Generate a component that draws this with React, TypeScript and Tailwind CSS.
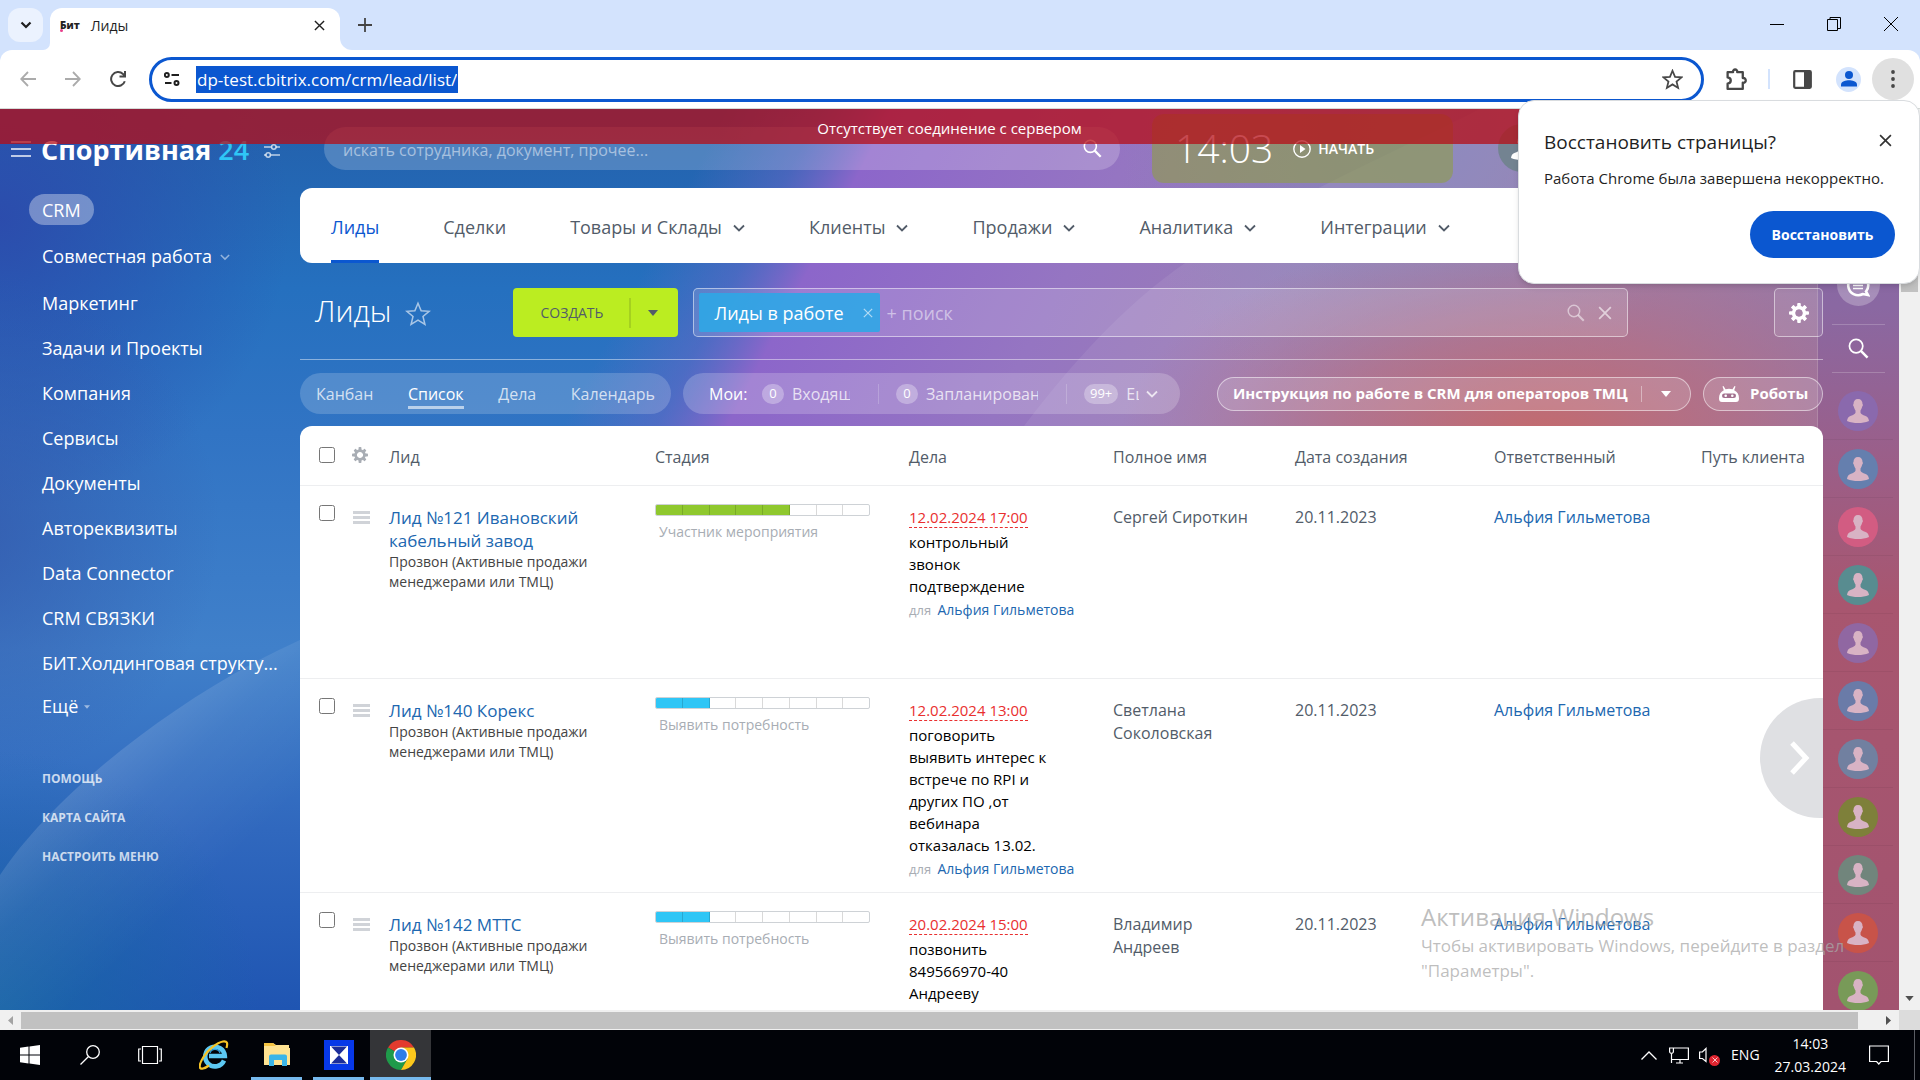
import React from 'react';

type IconProps = { className?: string };

/* ---------- icons ---------- */
const Chevron = ({ className = '' }: IconProps) => (
  <svg viewBox="0 0 12 12" className={className} fill="none" stroke="currentColor" strokeWidth="1.8">
    <path d="M1 3.5l5 5 5-5" />
  </svg>
);
const Caret = ({ className = '' }: IconProps) => (
  <svg viewBox="0 0 10 6" className={className} fill="currentColor">
    <path d="M0 0h10L5 6z" />
  </svg>
);
const Cross = ({ className = '' }: IconProps) => (
  <svg viewBox="0 0 12 12" className={className} fill="none" stroke="currentColor" strokeWidth="1.5">
    <path d="M1 1l10 10M11 1L1 11" />
  </svg>
);
const Magnifier = ({ className = '' }: IconProps) => (
  <svg viewBox="0 0 22 22" className={className} fill="none" stroke="currentColor">
    <circle cx="8.5" cy="8.5" r="7" strokeWidth="1.8" />
    <path d="M13.5 13.5l7 7" strokeWidth="2.6" />
  </svg>
);
const Star = ({ className = '', width = 1.5 }: IconProps & { width?: number }) => (
  <svg viewBox="0 0 24 24" className={className} fill="none" stroke="currentColor" strokeWidth={width}>
    <path d="M12 2l2.9 7 7.4.5-5.7 4.8 1.8 7.3L12 17.6l-6.4 4 1.8-7.3L1.7 9.500l7.400-.5z" />
  </svg>
);
const Gear = ({ className = '' }: IconProps) => (
  <svg viewBox="0 0 20 20" className={className} fill="currentColor">
    {[0, 45, 90, 135].map((a) => (
      <rect key={a} x="8.200" y="0" width="3.600" height="20" rx="1" transform={`rotate(${a} 10 10)`} mask="url(#gearHole)" />
    ))}
    <path fillRule="evenodd" d="M10 2.800a7.200 7.200 0 1 0 0 14.400 7.200 7.200 0 0 0 0-14.400zm0 3.400a3.800 3.800 0 1 1 0 7.600 3.800 3.800 0 0 1 0-7.600z" />
  </svg>
);
const GearDefs = () => (
  <svg className="absolute h-0 w-0">
    <mask id="gearHole" maskUnits="userSpaceOnUse" x="0" y="0" width="20" height="20">
      <rect width="20" height="20" fill="#fff" />
      <circle cx="10" cy="10" r="4" fill="#000" />
    </mask>
  </svg>
);
const Person = ({ className = '' }: IconProps) => (
  <svg viewBox="0 0 22 24" className={className} fill="currentColor">
    <path d="M11 0c3 0 4.500 2 4.500 5 .6.4.5 2-.3 2.600-.4 2-1 3-1.700 3.800v2.400c.6 1.600 2.500 2.200 4.500 3 2.400 1 3.600 2.200 4 5.200C18.500 23.500 15 24 11 24S3.500 23.500 0 22c.4-3 1.600-4.200 4-5.200 2-.8 3.900-1.400 4.500-3v-2.400C7.800 10.600 7.200 9.600 6.800 7.600 6 7 5.900 5.400 6.500 5c0-3 1.500-5 4.500-5z" />
  </svg>
);

/* ---------- browser chrome ---------- */
function TabStrip() {
  return (
    <div className="flex h-[50px] items-start bg-[#d3e3fd] pt-2">
      <button aria-label="Поиск вкладок" className="ml-2 flex h-[34px] w-[35px] items-center justify-center rounded-xl bg-[#ebf2fe] text-[#1f1f1f]">
        <svg viewBox="0 0 12 12" className="h-3 w-3" fill="none" stroke="currentColor" strokeWidth="2.2"><path d="M1.500 3.500L6 8l4.500-4.500" /></svg>
      </button>
      <div className="flex h-[42px] w-[7px] items-end overflow-hidden bg-white">
        <div className="h-full w-full rounded-br-xl bg-[#d3e3fd]" />
      </div>
      <div className="flex h-[42px] w-[290px] items-center rounded-t-xl bg-white pr-[11px] pb-2 pl-[10px] text-sm text-[#1f1f1f]">
        <span className="relative text-[10px] font-extrabold tracking-normal text-[#222]">
          Бит
          <span className="absolute bottom-0 left-0 h-[3px] w-[3px] rounded-full bg-[#e8408c]" />
        </span>
        <span className="ml-[11px] flex-1 pt-[2px]">Лиды</span>
        <button aria-label="Закрыть вкладку" className="p-1 text-[#1f1f1f]"><Cross className="h-[11px] w-[11px]" /></button>
      </div>
      <div className="h-[42px] w-[14px] bg-white"><div className="h-full w-full rounded-bl-xl bg-[#d3e3fd]" /></div>
      <button aria-label="Новая вкладка" className="mt-[10px] ml-1 text-[#444]">
        <svg viewBox="0 0 14 14" className="h-[14px] w-[14px]" fill="none" stroke="currentColor" strokeWidth="1.800"><path d="M7 0v14M0 7h14" /></svg>
      </button>
      <div className="ml-auto flex items-center gap-[43px] pt-[9px] pr-[22px] text-black">
        <button aria-label="Свернуть"><svg viewBox="0 0 14 14" className="h-[14px] w-[14px]" stroke="currentColor"><path d="M0 7.500h14" /></svg></button>
        <button aria-label="Развернуть"><svg viewBox="0 0 14 14" className="h-[14px] w-[14px]" fill="none" stroke="currentColor"><path d="M.5 2.500h10v11H.5zM3 2.500v-2h10.500v11h-3" /></svg></button>
        <button aria-label="Закрыть"><svg viewBox="0 0 14 14" className="h-[14px] w-[14px]" fill="none" stroke="currentColor"><path d="M0 0l14 14M14 0L0 14" /></svg></button>
      </div>
    </div>
  );
}

function Toolbar() {
  return (
    <div className="bg-[#d3e3fd]">
      <div className="flex h-[59px] items-center rounded-t-xl border-b border-[#d5dbd8] bg-white pr-[6px] pl-5 text-[#474747]">
        <div className="flex gap-[29px] pb-[1px]">
          <button aria-label="Назад" className="text-[#ababab]">
            <svg viewBox="0 0 16 16" className="h-4 w-4" fill="none" stroke="currentColor" strokeWidth="1.800"><path d="M16 8H1.500M8 1L1.200 8 8 15" /></svg>
          </button>
          <button aria-label="Вперёд" className="text-[#ababab]">
            <svg viewBox="0 0 16 16" className="h-4 w-4" fill="none" stroke="currentColor" strokeWidth="1.800"><path d="M0 8h14.500M8 1l6.800 7L8 15" /></svg>
          </button>
          <button aria-label="Обновить">
            <svg viewBox="0 0 16 16" className="h-4 w-4" fill="none" stroke="currentColor" strokeWidth="2"><path d="M14.800 10.200A7 7 0 1 1 13 3l2 2M15 0v5.600H9.500" /></svg>
          </button>
        </div>
        <form className="ml-[23px] flex h-[45px] flex-1 items-center rounded-full border-[3px] border-[#0b57d0] pr-[18px] pl-3" onSubmit={(e) => e.preventDefault()}>
          <svg viewBox="0 0 16 14" className="h-[14px] w-4 text-[#1f1f1f]" fill="none" stroke="currentColor" strokeWidth="2">
            <circle cx="2.800" cy="3" r="2" /><path d="M7.500 3H15M1 11h6.500" /><circle cx="12.500" cy="11" r="2" />
          </svg>
          <div className="ml-4 flex flex-1">
            <label className="sr-only" htmlFor="url">Адрес</label>
            <input id="url" readOnly defaultValue="dp-test.cbitrix.com/crm/lead/list/" className="h-[27px] w-[262px] bg-[#0b57d0] px-[1px] text-[17px] text-white outline-none" />
          </div>
          <button type="button" aria-label="Добавить в закладки"><Star className="h-[21px] w-[21px]" width={2} /></button>
        </form>
        <button aria-label="Расширения" className="ml-[21px]">
          <svg viewBox="0 0 22 22" className="h-[23px] w-[23px]" fill="none" stroke="currentColor" strokeWidth="2.200">
            <path d="M2.500 4h5.200c-.6-3.400 4.600-3.400 4 0h5.300v5.600c3.800-.5 3.800 5 0 4.500V20H2.500v-5c4-.5 4-5.500 0-6z" strokeLinejoin="round" />
          </svg>
        </button>
        <span className="ml-5 h-5 w-[2px] bg-[#d3e3fd]" />
        <button aria-label="Боковая панель" className="ml-[23px]">
          <svg viewBox="0 0 19 19" className="h-[19px] w-[19px]"><rect x="1.200" y="1.200" width="16.600" height="16.600" rx="1" fill="none" stroke="currentColor" strokeWidth="2.200" /><path d="M11 1h7v17h-7z" fill="currentColor" /></svg>
        </button>
        <button aria-label="Профиль" className="ml-6 flex h-[25px] w-[25px] items-center justify-center rounded-full bg-[#d3e3fd] text-[#0b57d0]">
          <svg viewBox="0 0 16 16" className="h-4 w-4" fill="currentColor"><circle cx="8" cy="4" r="4" /><path d="M0 15.500v-2c0-3 5-4.200 8-4.200s8 1.200 8 4.200v2z" /></svg>
        </button>
        <button aria-label="Меню" className="ml-[11px] flex h-[42px] w-[42px] items-center justify-center rounded-full bg-[#e0e0e0]">
          <svg viewBox="0 0 4 18" className="h-[18px] w-1" fill="currentColor"><circle cx="2" cy="2" r="1.900" /><circle cx="2" cy="9" r="1.900" /><circle cx="2" cy="16" r="1.900" /></svg>
        </button>
      </div>
    </div>
  );
}

function RestorePopup() {
  return (
    <div role="dialog" aria-labelledby="restore" className="absolute top-[100px] right-0 z-30 w-[402px] rounded-2xl border border-[#d9dcdf] bg-white pt-[27px] pr-6 pb-[25px] pl-[25px] text-[#1f1f1f] shadow-md">
      <div className="flex items-center justify-between pr-[3px]">
        <h2 id="restore" className="text-[19px] leading-[28px] font-medium">Восстановить страницы?</h2>
        <button aria-label="Закрыть" className="-mt-1 text-[#333]"><Cross className="h-[13px] w-[13px]" /></button>
      </div>
      <p className="mt-[10px] text-[15px] leading-6 whitespace-nowrap">Работа Chrome была завершена некорректно.</p>
      <button className="mt-[21px] ml-auto flex h-[47px] w-[145px] items-center justify-center rounded-full bg-[#0b57d0] text-sm font-bold text-white">Восстановить</button>
    </div>
  );
}

/* ---------- page ---------- */
function Wallpaper() {
  return (
    <svg className="absolute inset-0 h-full w-full" viewBox="0 0 1899 901" preserveAspectRatio="none" aria-hidden="true">
      <defs>
        <linearGradient id="side" x1="0" y1="0" x2="0" y2="1">
          <stop offset="0" stopColor="#2360ab" />
          <stop offset=".2" stopColor="#2570bf" />
          <stop offset=".36" stopColor="#3174c4" />
          <stop offset=".6" stopColor="#4080ca" />
          <stop offset=".8" stopColor="#3068be" />
          <stop offset="1" stopColor="#1f55b2" />
        </linearGradient>
        <linearGradient id="sweep" gradientUnits="userSpaceOnUse" x1="560" y1="230" x2="1800" y2="875">
          <stop offset=".03" stopColor="#6a68c4" stopOpacity="0" />
          <stop offset=".09" stopColor="#6d66c6" stopOpacity=".5" />
          <stop offset=".135" stopColor="#8c66ca" />
          <stop offset=".3" stopColor="#9575c2" />
          <stop offset=".45" stopColor="#9a7cb4" />
          <stop offset=".65" stopColor="#97739f" />
          <stop offset="1" stopColor="#87659f" />
        </linearGradient>
        <radialGradient id="left" gradientUnits="userSpaceOnUse" cx="0" cy="110" r="290">
          <stop offset="0" stopColor="#2c4bac" stopOpacity=".95" />
          <stop offset="1" stopColor="#2c4bac" stopOpacity="0" />
        </radialGradient>
        <radialGradient id="left2" gradientUnits="userSpaceOnUse" cx="-40" cy="420" r="260">
          <stop offset="0" stopColor="#3457ab" stopOpacity=".8" />
          <stop offset="1" stopColor="#3457ab" stopOpacity="0" />
        </radialGradient>
        <radialGradient id="teal" gradientUnits="userSpaceOnUse" cx="0" cy="901" r="260">
          <stop offset="0" stopColor="#1a65a8" />
          <stop offset="1" stopColor="#1a65a8" stopOpacity="0" />
        </radialGradient>
        <radialGradient id="rose" gradientUnits="userSpaceOnUse" cx="1540" cy="330" r="420" gradientTransform="translate(0 165) scale(1 .5)">
          <stop offset="0" stopColor="#c46a6c" />
          <stop offset=".5" stopColor="#bb6c7c" stopOpacity=".6" />
          <stop offset="1" stopColor="#b06c8c" stopOpacity="0" />
        </radialGradient>
        <radialGradient id="blueTop" gradientUnits="userSpaceOnUse" cx="1420" cy="20" r="300">
          <stop offset="0" stopColor="#8284bc" stopOpacity=".9" />
          <stop offset="1" stopColor="#8284bc" stopOpacity="0" />
        </radialGradient>
        <linearGradient id="rail" x1="0" y1="0" x2="0" y2="1">
          <stop offset="0" stopColor="#8568aa" />
          <stop offset=".22" stopColor="#8a68a2" />
          <stop offset=".38" stopColor="#9a5f8a" />
          <stop offset=".55" stopColor="#a8566f" />
          <stop offset="1" stopColor="#a2536f" />
        </linearGradient>
        <linearGradient id="arc" gradientUnits="userSpaceOnUse" x1="80" y1="610" x2="220" y2="760">
          <stop offset="0" stopColor="#fff" stopOpacity=".2" />
          <stop offset=".5" stopColor="#fff" stopOpacity=".06" />
          <stop offset="1" stopColor="#fff" stopOpacity="0" />
        </linearGradient>
      </defs>
      <rect width="1899" height="901" fill="url(#side)" />
      <rect width="300" height="901" fill="url(#left)" />
      <rect width="300" height="901" fill="url(#left2)" />
      <rect width="300" height="901" fill="url(#teal)" />
      <path d="M0 766C50 690 170 590 300 531V901H0z" fill="url(#arc)" />
      <rect x="300" width="1599" height="901" fill="url(#sweep)" />
      <rect x="900" width="999" height="330" fill="url(#blueTop)" />
      <path d="M1024 317C1090 230 1160 160 1240 122 1300 85 1400 40 1480 0H1899V317z" fill="#fff" fillOpacity=".07" />
      <rect x="1000" y="100" width="899" height="300" fill="url(#rose)" />
      <rect x="1818" width="81" height="901" fill="url(#rail)" />
      <path d="M1817.500 0v330" stroke="#fff" strokeOpacity=".15" />
    </svg>
  );
}

const MENU = ['Маркетинг', 'Задачи и Проекты', 'Компания', 'Сервисы', 'Документы', 'Автореквизиты', 'Data Connector', 'CRM СВЯЗКИ', 'БИТ.Холдинговая структу...'];

function Sidebar() {
  return (
    <aside className="w-[300px] shrink-0 text-lg text-white">
      <div className="flex h-[79px] items-start pt-[22px] pl-[11px]">
        <button aria-label="Меню" className="flex flex-col gap-[5px] pt-[10px]">
          <span className="h-[2px] w-5 bg-white/70" /><span className="h-[2px] w-5 bg-white/70" /><span className="h-[2px] w-5 bg-white/70" />
        </button>
        <span className="ml-[10px] text-[27px] leading-[38px] font-bold">Спортивная <span className="font-semibold text-[#2fc6f6]">24</span></span>
        <svg viewBox="0 0 16 14" className="mt-[13px] ml-[15px] h-[14px] w-4 text-white/70" fill="none" stroke="currentColor" strokeWidth="1.600">
          <path d="M0 3h7.500M12 3h4M0 11h2M6.500 11H16" /><circle cx="9.800" cy="3" r="2.200" /><circle cx="4.200" cy="11" r="2.200" />
        </svg>
      </div>
      <nav className="pt-[6px] pl-[29px]">
        <a href="#crm" className="inline-flex h-[31px] items-center rounded-full bg-white/35 px-[13px]">CRM</a>
        <a href="#collab" className="mt-2 flex h-[46px] items-center gap-2 pl-[13px]">Совместная работа <Chevron className="mt-[1px] h-[10px] w-[10px] text-white/50" /></a>
        {MENU.map((m) => (
          <a key={m} href="#menu" className="flex h-[45px] items-center pt-[2px] pl-[13px] whitespace-nowrap">{m}</a>
        ))}
        <a href="#more" className="flex h-[43px] items-center gap-[6px] pl-[13px]">Ещё <Caret className="mt-[2px] h-1 w-[6px] text-white/50" /></a>
      </nav>
      <div className="mt-[41px] flex flex-col gap-[17px] pl-[42px] text-xs leading-[22px] font-bold text-white/75">
        <a href="#help">ПОМОЩЬ</a><a href="#map">КАРТА САЙТА</a><a href="#setup">НАСТРОИТЬ МЕНЮ</a>
      </div>
    </aside>
  );
}

const NAV: [string, boolean][] = [['Сделки', false], ['Товары и Склады', true], ['Клиенты', true], ['Продажи', true], ['Аналитика', true], ['Интеграции', true]];

const Badge = ({ children }: { children: React.ReactNode }) => (
  <span className="flex h-5 min-w-[22px] items-center justify-center rounded-full bg-white/30 px-[6px] text-[13px] text-white">{children}</span>
);

function Header() {
  return (
    <>
      <div className="flex h-[79px] items-start">
        <form className="mt-[18px] ml-6 flex h-[43px] w-[796px] items-center rounded-full bg-white/20 pr-[18px] pl-[19px] text-white" onSubmit={(e) => e.preventDefault()}>
          <label htmlFor="find" className="sr-only">Поиск</label>
          <input id="find" placeholder="искать сотрудника, документ, прочее..." className="flex-1 bg-transparent pt-[2px] text-base text-white outline-none placeholder:text-white/50" />
          <button aria-label="Найти"><Magnifier className="h-[19px] w-[19px]" /></button>
        </form>
        <div className="mt-[5px] ml-8 flex h-[69px] w-[301px] items-center rounded-xl bg-[#8f9c48]/60 pl-[23px] text-white">
          <span className="text-[39px] font-light">14:03</span>
          <button className="ml-5 flex items-center gap-[7px] text-sm font-semibold">
            <svg viewBox="0 0 18 18" className="h-[18px] w-[18px]"><circle cx="9" cy="9" r="8.200" fill="none" stroke="currentColor" strokeWidth="1.400" /><path d="M7 5l5.500 4L7 13z" fill="currentColor" /></svg>
            НАЧАТЬ
          </button>
        </div>
        <div className="mt-[15px] ml-[45px] flex h-12 w-12 items-center justify-center rounded-full bg-[#738391] text-white"><Person className="h-6 w-6" /></div>
      </div>
      <nav className="flex h-[75px] items-center gap-16 rounded-xl bg-white px-[31px] text-lg font-medium whitespace-nowrap text-[#525c69]">
        <a href="#leads" className="flex h-full items-center border-y-3 border-transparent border-b-[#0b57d0] pt-[2px] text-[#0b57d0]">Лиды</a>
        {NAV.map(([t, sub]) => (
          <a key={t} href="#section" className="flex items-center gap-[11px] pt-[2px]">{t}{sub && <Chevron className="mt-[3px] h-3 w-3" />}</a>
        ))}
      </nav>
      <div className="mt-[25px] flex h-[49px] items-center">
        <h1 className="ml-[15px] pb-1 text-[30px] font-light text-white">Лиды</h1>
        <button aria-label="В избранное" className="mt-[2px] ml-[13px] text-white/60"><Star className="h-[26px] w-[26px]" width={1.4} /></button>
        <div className="ml-[82px] flex h-full w-[165px] shrink-0 items-center rounded-[4px] bg-[#bbed21] text-[#525c69]">
          <button className="w-[116px] pl-[3px] text-sm font-medium">СОЗДАТЬ</button>
          <span className="h-[30px] w-[2px] bg-[#a5d11f]" />
          <button aria-label="Другие варианты" className="flex flex-1 justify-center pr-[2px]"><Caret className="h-[6px] w-[10px]" /></button>
        </div>
        <div className="ml-[15px] flex h-full flex-1 items-center rounded-[5px] border border-white/50 bg-white/15 pr-[15px] pl-[5px]">
          <span className="flex h-[39px] w-[181px] items-center rounded-[2px] bg-[#2fa6e6]/90 pl-4 text-lg text-white">
            Лиды в работе
            <button aria-label="Убрать фильтр" className="ml-auto pr-[7px] text-white/60"><Cross className="h-[10px] w-[10px]" /></button>
          </span>
          <label htmlFor="filter" className="sr-only">Поиск по лидам</label>
          <input id="filter" placeholder="+ поиск" className="ml-[7px] flex-1 bg-transparent text-lg text-white outline-none placeholder:text-white/50" />
          <button aria-label="Искать" className="text-white/50"><Magnifier className="h-[18px] w-[18px]" /></button>
          <button aria-label="Очистить" className="ml-[13px] text-white/60"><Cross className="h-[14px] w-[14px]" /></button>
        </div>
        <button aria-label="Настройки" className="ml-[146px] flex h-full w-[49px] items-center justify-center rounded-[5px] border border-white/50 bg-white/10 text-white"><Gear className="h-5 w-5" /></button>
      </div>
      <hr className="mt-[22px] border-white/45" />
      <div className="mt-[13px] flex h-[41px] items-center text-base whitespace-nowrap text-white/75">
        <div className="flex h-full w-[371px] items-center justify-between rounded-full bg-white/18 px-4">
          <a href="#kanban">Канбан</a>
          <a href="#list" className="mt-1 border-b-3 border-white/60 leading-6 text-white">Список</a>
          <a href="#todo">Дела</a>
          <a href="#calendar">Календарь</a>
        </div>
        <div className="ml-3 flex h-full w-[497px] items-center rounded-full bg-white/20 pl-[26px]">
          <span className="w-[53px] text-white">Мои:</span>
          <Badge>0</Badge>
          <span className="ml-2 w-[58px] overflow-hidden">Входящие</span>
          <span className="mr-[17px] ml-7 h-5 w-px bg-white/20" />
          <Badge>0</Badge>
          <span className="ml-2 w-[112px] overflow-hidden">Запланированы</span>
          <span className="mr-[17px] ml-7 h-5 w-px bg-white/20" />
          <Badge>99+</Badge>
          <span className="ml-2 w-[13px] overflow-hidden">Ещё</span>
          <Chevron className="ml-[7px] h-3 w-3" />
        </div>
        <div className="ml-[37px] flex h-[34px] flex-1 items-center rounded-full border border-white/50 bg-white/15 pl-[15px] text-white">
          <button className="flex-1 text-left text-[15px] font-bold">Инструкция по работе в CRM для операторов ТМЦ</button>
          <span className="ml-2 h-4 w-px bg-white/40" />
          <button aria-label="Ещё инструкции" className="flex w-12 justify-center"><Caret className="h-[6px] w-[10px]" /></button>
        </div>
        <button className="ml-3 flex h-[34px] w-[120px] items-center rounded-full border border-white/50 bg-white/15 pl-[15px] text-[15px] font-bold text-white">
          <svg viewBox="0 0 20 16" className="h-4 w-5" fill="currentColor"><path d="M4.500 0l2 3.300a12 12 0 0 1 7 0l2-3.300 1 .6-1.300 3.600C18.500 6 20 8.500 20 12.500c0 2.500-1 3.500-3 3.500H3c-2 0-3-1-3-3.500C0 8.500 1.500 6 4.800 4.200L3.500.6z" /><rect x="3" y="7.500" width="14" height="4.500" rx="2.200" fill="#a2708e" /><circle cx="6.700" cy="9.700" r="1.300" /><circle cx="13.300" cy="9.700" r="1.300" /></svg>
          <span className="ml-[11px]">Роботы</span>
        </button>
      </div>
    </>
  );
}

type Lead = { title: string; fill: number; color: string; stage: string; due: string; todo: string; who?: string; name: string; height: string };
const LEADS: Lead[] = [
  { title: 'Лид №121 Ивановский кабельный завод', fill: 5, color: 'bg-[#8fc82e]', stage: 'Участник мероприятия', due: '12.02.2024 17:00', todo: 'контрольный звонок подтверждение', who: 'Альфия Гильметова', name: 'Сергей Сироткин', height: 'h-[193px]' },
  { title: 'Лид №140 Корекс', fill: 2, color: 'bg-[#2fc6f6]', stage: 'Выявить потребность', due: '12.02.2024 13:00', todo: 'поговорить выявить интерес к встрече по RPI и других ПО ,от вебинара отказалась 13.02.', who: 'Альфия Гильметова', name: 'Светлана Соколовская', height: 'h-[214px]' },
  { title: 'Лид №142 МТТС', fill: 2, color: 'bg-[#2fc6f6]', stage: 'Выявить потребность', due: '20.02.2024 15:00', todo: 'позвонить 849566970-40 Андрееву', name: 'Владимир Андреев', height: 'h-[193px]' },
];

function LeadRow({ l }: { l: Lead }) {
  return (
    <tr className={`${l.height} border-b border-[#edeef0] align-top`}>
      <td className="pt-[19px] pl-[19px]"><input type="checkbox" aria-label={l.title} className="block h-4 w-4" /></td>
      <td className="pt-[25px] pl-2">
        <button aria-label="Действия" className="flex flex-col gap-[2px]">
          <span className="h-[3px] w-[17px] bg-[#d0d3d8]" /><span className="h-[3px] w-[17px] bg-[#d0d3d8]" /><span className="h-[3px] w-[17px] bg-[#d0d3d8]" />
        </button>
      </td>
      <td className="pt-5 pl-2 leading-[23px]">
        <a href="#lead" className="block w-[200px] text-[17px] text-[#2067b0]">{l.title}</a>
        <div className="w-[210px] text-sm leading-5 text-[#444]">Прозвон (Активные продажи менеджерами или ТМЦ)</div>
      </td>
      <td className="pt-[18px] pl-2">
        <div className="flex h-3 w-[215px] overflow-hidden rounded-[2px] border border-[#ced2d6]">
          {Array.from({ length: 8 }, (_, i) => (
            <span key={i} className={`flex-1 border-black/15 ${i < 7 ? 'border-r' : ''} ${i < l.fill ? l.color : ''}`} />
          ))}
        </div>
        <div className="mt-[6px] pl-1 text-sm leading-5 text-[#a8adb4]">{l.stage}</div>
      </td>
      <td className="pt-5 pl-2 text-[15px] leading-[22px] whitespace-nowrap text-black">
        <span className="inline-block border-b border-dashed border-[#e92f2f] leading-5 text-[#e92f2f]">{l.due}</span>
        <div className="mt-[3px] w-[144px] whitespace-normal">{l.todo}</div>
        {l.who && <div className="mt-[2px] text-[13px] text-[#a8adb4]">для <a href="#user" className="ml-[3px] text-sm text-[#2067b0]">{l.who}</a></div>}
      </td>
      <td className="pt-5 pl-2 leading-[23px]"><div className="w-[145px]">{l.name}</div></td>
      <td className="pt-5 pl-2 leading-[23px]">20.11.2023</td>
      <td className="pt-5 pl-2 leading-[23px]"><a href="#user" className="text-[#2067b0]">Альфия Гильметова</a></td>
      <td />
    </tr>
  );
}

function Grid() {
  return (
    <div className="relative mt-3 min-h-0 flex-1 overflow-hidden rounded-t-xl bg-white">
      <table className="w-full table-fixed border-collapse text-base text-[#525c69]">
        <colgroup>
          <col className="w-[45px]" /><col className="w-9" /><col className="w-[266px]" /><col className="w-[254px]" /><col className="w-[204px]" /><col className="w-[182px]" /><col className="w-[199px]" /><col className="w-[207px]" /><col />
        </colgroup>
        <thead>
          <tr className="h-[59px] border-b border-[#edeef0] text-left whitespace-nowrap">
            <th className="pl-[19px]"><input type="checkbox" aria-label="Выбрать все" className="block h-4 w-4" /></th>
            <th className="pl-[7px]"><button aria-label="Настройка колонок" className="block text-[#a8adb4]"><Gear className="h-4 w-4" /></button></th>
            {['Лид', 'Стадия', 'Дела', 'Полное имя', 'Дата создания', 'Ответственный', 'Путь клиента'].map((h) => (
              <th key={h} className="pt-[3px] pl-2 font-normal">{h}</th>
            ))}
          </tr>
        </thead>
        <tbody>{LEADS.map((l) => <LeadRow key={l.title} l={l} />)}</tbody>
      </table>
      <button aria-label="Прокрутить вправо" className="absolute top-[272px] right-0 flex h-[120px] w-[63px] items-center rounded-l-full bg-[#dfe0e3] pl-[30px] text-white">
        <svg viewBox="0 0 20 34" className="h-[34px] w-5" fill="none" stroke="currentColor" strokeWidth="5"><path d="M2 2l14 15L2 32" /></svg>
      </button>
    </div>
  );
}

const AVATARS = ['bg-[#8a69ad]', 'bg-[#657fae]', 'bg-[#d25c82]', 'bg-[#588c90]', 'bg-[#9067a2]', 'bg-[#6a7ba8]', 'bg-[#7180a0]', 'bg-[#7e803a]', 'bg-[#71857c]', 'bg-[#c85349]', 'bg-[#789a58]'];

function Rail() {
  return (
    <div className="flex w-[76px] shrink-0 flex-col items-center pt-[154px] pr-[6px] text-white">
      <button aria-label="Сообщения" className="flex h-[43px] w-[43px] shrink-0 items-center justify-center rounded-full bg-white/25">
        <svg viewBox="0 0 24 24" className="h-6 w-6" fill="none" stroke="currentColor" strokeWidth="2.600"><path d="M20 18.500a10 10 0 1 0-3 2.500l5 1z" /><path d="M7 9.500h10M7 12.500h10M7 15.500h10" strokeWidth="1.600" /></svg>
      </button>
      <span className="mt-[18px] h-px w-[53px] shrink-0 bg-white/20" />
      <button aria-label="Поиск" className="my-[13px] shrink-0"><Magnifier className="h-[21px] w-[21px]" /></button>
      <span className="h-px w-[53px] shrink-0 bg-white/20" />
      <div className="mt-[9px] flex flex-col">
        {AVATARS.map((c) => (
          <div key={c} className="flex h-[58px] w-[70px] shrink-0 items-center justify-center border-b border-black/5">
            <span className={`flex h-10 w-10 items-center justify-center rounded-full text-[#d8b3c4] ${c}`}><Person className="h-6 w-[22px]" /></span>
          </div>
        ))}
      </div>
    </div>
  );
}

/* ---------- taskbar ---------- */
function Taskbar() {
  return (
    <footer className="flex h-[50px] shrink-0 items-center bg-[#010308] text-white">
      <button aria-label="Пуск" className="ml-5"><svg viewBox="0 0 20 20" className="h-5 w-5" fill="currentColor"><path d="M0 2.800L8.500 1.600v7.900H0zM9.500 1.400L20 0v9.500H9.500zM0 10.500h8.500v7.900L0 17.200zM9.500 10.500H20V20L9.500 18.600z" /></svg></button>
      <button aria-label="Поиск" className="ml-10"><svg viewBox="0 0 20 20" className="h-5 w-5" fill="none" stroke="currentColor" strokeWidth="1.300"><circle cx="13" cy="7" r="6.300" /><path d="M8.500 11.500L.5 19.500" /></svg></button>
      <button aria-label="Представление задач" className="ml-[38px]"><svg viewBox="0 0 24 20" className="h-5 w-6" fill="none" stroke="currentColor" strokeWidth="1.200"><path d="M4.500 1.500h15v17h-15zM3 4H.7v12H3M21 4h2.300v12H21" /></svg></button>
      <button aria-label="Internet Explorer" className="ml-[37px]">
        <svg viewBox="0 0 30 30" className="h-[30px] w-[30px]" fill="none">
          <path d="M25 20.500a9.800 9.800 0 1 1 .8-4.500H10" stroke="#5cc8f2" strokeWidth="4.600" />
          <path d="M11 13a5.300 5.300 0 0 1 10 0" stroke="#2f9fdc" strokeWidth="1.200" />
          <path d="M27.500 8C29 3 28 .8 24 1.500 18 2.500 9 9.500 4.500 17-.5 25-.5 29.500 4 28.500c2-.4 4-1.500 6-3" stroke="#f6c326" strokeWidth="2.200" />
        </svg>
      </button>
      <button aria-label="Проводник" className="ml-[22px] flex h-full w-[51px] flex-col items-center border-b-3 border-[#76b9ed] pt-3">
        <svg viewBox="0 0 28 24" className="h-6 w-7"><path d="M1 1h9l3 2h13v3h1v17H1z" fill="#ffe391" /><path d="M1 1h9l3 3H1z" fill="#f5c442" /><path d="M6 24V14.500a2 2 0 0 1 2-2h14a2 2 0 0 1 2 2V24h-5v-6h-8v6z" fill="#3bb5e8" /></svg>
      </button>
      <button aria-label="Приложение" className="ml-[11px] flex h-full w-[51px] flex-col items-center border-b-3 border-[#76b9ed] pt-[10px]">
        <svg viewBox="0 0 30 30" className="h-[30px] w-[30px]"><path d="M0 0h30v30H0z" fill="#0738e8" /><path d="M6 6h18v18H6z" fill="#fff" /><path d="M7 6.500h16L15 15zM7 23.500h16L15 15z" fill="#1c2d9a" /></svg>
      </button>
      <button aria-label="Google Chrome" className="ml-[6px] flex h-full w-[61px] flex-col items-center border-b-3 border-[#76b9ed] bg-[#343538] pt-[10px]">
        <svg viewBox="0 0 30 30" className="h-[30px] w-[30px]">
          <path d="M15 15L2 7.500A15 15 0 0 1 28 7.500H15z" fill="#e33b2e" />
          <path d="M15 15l6.500 3.800L15 30A15 15 0 0 1 2 7.500z" fill="#1f9a4a" />
          <path d="M15 7.500h13A15 15 0 0 1 15 30l6.500-11.200z" fill="#fcc81c" />
          <circle cx="15" cy="15" r="7.500" fill="#fff" /><circle cx="15" cy="15" r="5.900" fill="#2f7de9" />
        </svg>
      </button>
      <div className="ml-auto flex h-full items-center text-sm">
        <svg viewBox="0 0 16 9" className="h-[9px] w-4" fill="none" stroke="currentColor" strokeWidth="1.300"><path d="M.5 8.500L8 1l7.500 7.500" /></svg>
        <svg viewBox="0 0 20 17" className="ml-3 h-[17px] w-5" fill="none" stroke="currentColor" strokeWidth="1.200"><path d="M5 1h14.400v11.500H3M11 12.500V16M7 16h7M2.500 7v9M.6 1h3.800v3.500c0 2.500-3.800 2.500-3.800 0z" /></svg>
        <span className="relative ml-[10px]">
          <svg viewBox="0 0 20 17" className="h-[17px] w-5" fill="none" stroke="currentColor" strokeWidth="1.200"><path d="M.6 5h2.800L7 1.500v13L3.400 11.500H.6z" /></svg>
          <span className="absolute -right-[1px] -bottom-[2px] flex h-[11px] w-[11px] items-center justify-center rounded-full bg-[#e0242f]"><Cross className="h-[6px] w-[6px]" /></span>
        </span>
        <span className="ml-3">ENG</span>
        <div className="ml-[15px] text-center leading-[23px]"><div>14:03</div><div>27.03.2024</div></div>
        <svg viewBox="0 0 20 20" className="ml-[23px] h-5 w-5" fill="none" stroke="currentColor" strokeWidth="1.200"><path d="M.6 1h18.800v15.500H12L9.800 19l-2.200-2.500h-7z" /></svg>
        <span className="mr-[5px] ml-[25px] h-full w-px bg-[#5a5d63]" />
      </div>
    </footer>
  );
}

export default function App() {
  return (
    <div className="relative flex h-screen flex-col overflow-hidden bg-white font-['Open_Sans',sans-serif]">
      <GearDefs />
      <TabStrip />
      <Toolbar />
      <div className="flex min-h-0 flex-1">
        <div className="relative flex min-w-0 flex-1 overflow-hidden">
          <Wallpaper />
          <div className="relative flex min-w-0 flex-1">
            <Sidebar />
            <main className="flex min-w-0 flex-1 flex-col"><Header /><Grid /></main>
            <Rail />
          </div>
          <div role="alert" className="absolute inset-x-0 top-0 flex h-[35px] items-center justify-center bg-[#b60d17]/75 pt-[3px] text-[15px] text-white">Отсутствует соединение с сервером</div>
          <div className="pointer-events-none absolute right-[58px] bottom-[27px] w-[420px] text-[17px] leading-[25px] whitespace-nowrap text-[#a9a9a9]/75">
            <div className="text-2xl leading-8">Активация Windows</div>
            <div>Чтобы активировать Windows, перейдите в раздел</div>
            <div>"Параметры".</div>
          </div>
        </div>
        <div className="flex w-[21px] flex-col items-center bg-[#f0f0f0] text-[#505050]">
          <div className="mt-5 h-[163px] w-[17px] bg-[#c1c1c1]" />
          <Caret className="mt-auto mb-[9px] h-[5px] w-[9px]" />
        </div>
      </div>
      <div className="flex h-5 shrink-0 items-center bg-[#f0f0f0]">
        <svg viewBox="0 0 5 9" className="ml-2 h-[9px] w-[5px] text-[#a3a3a3]" fill="currentColor"><path d="M5 0v9L0 4.500z" /></svg>
        <div className="ml-2 h-[17px] flex-1 bg-[#c1c1c1]" />
        <svg viewBox="0 0 5 9" className="mr-2 ml-7 h-[9px] w-[5px] text-[#505050]" fill="currentColor"><path d="M0 0v9l5-4.500z" /></svg>
        <div className="h-full w-[21px] bg-[#dcdcdc]" />
      </div>
      <Taskbar />
      <RestorePopup />
    </div>
  );
}
